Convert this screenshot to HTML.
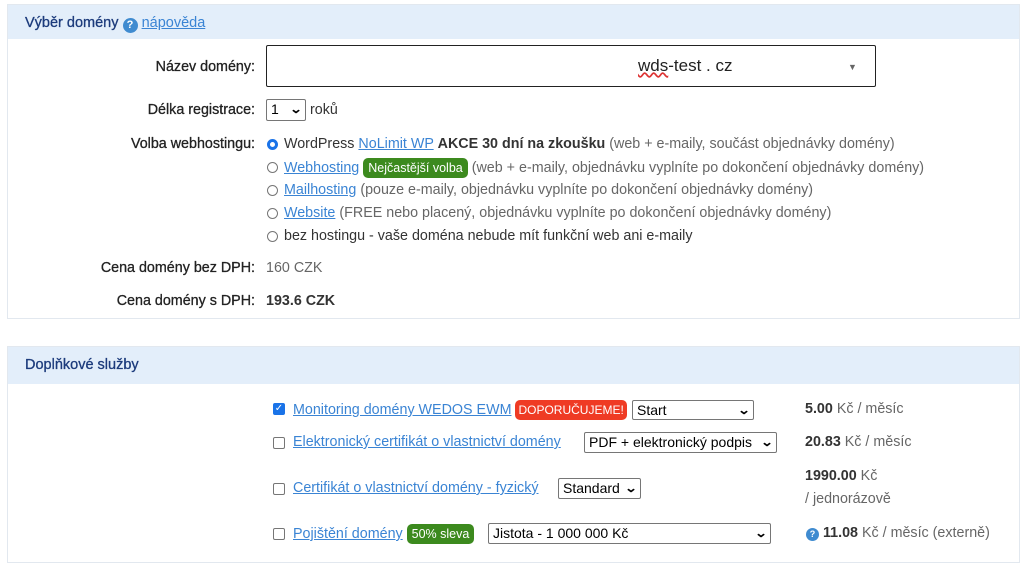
<!DOCTYPE html><html><head><meta charset="utf-8"><style>
body{margin:0;width:1024px;height:568px;background:#fff;font-family:"Liberation Sans",sans-serif;font-size:14.3px;color:#333;position:relative;overflow:hidden}
.a{position:absolute;white-space:nowrap;line-height:18px}
.panel{position:absolute;left:7px;width:1011px;border:1px solid #e2e8ef;background:#fff}
.hd{background:#e3eefa;height:34px;color:#1c3b7c;font-size:14.5px;padding-left:17px;line-height:34px;-webkit-text-stroke:0.3px #1c3b7c}
.lbl{position:absolute;right:769px;white-space:nowrap;line-height:18px;color:#222;-webkit-text-stroke:0.3px #222}
a{color:#3a84d4;text-decoration:underline}
.g{color:#666}
.sel{position:absolute;border:1px solid #767676;border-radius:2px;background:#fff;color:#000;font-size:14px;line-height:18px;padding-left:4px;box-sizing:border-box}
.sel i{position:absolute;right:4px;top:0px;font-style:normal;font-size:12px;font-weight:bold;transform:scaleX(1.3)}
.rad{position:absolute;width:11px;height:11px;border:1px solid #767676;border-radius:50%;box-sizing:border-box}
.cb{position:absolute;width:12px;height:12px;border:1px solid #767676;border-radius:2px;box-sizing:border-box}
.badge{display:inline-block;color:#fff;border-radius:5px;padding:0 5px;font-size:12.5px;line-height:20px;vertical-align:middle}
.q{display:inline-block;width:15px;height:15px;border-radius:50%;background:#3f8bd0;color:#fff;font-size:11px;font-weight:bold;text-align:center;line-height:15px;vertical-align:-2px}
</style></head><body>
<div class="panel" style="top:4px;height:313px"><div class="hd" style="line-height:36px">Výběr domény <span class="q" style="vertical-align:-1px;-webkit-text-stroke:0">?</span> <a style="-webkit-text-stroke:0">nápověda</a></div></div>
<div class="lbl" style="top:58px">Název domény:</div>
<div style="position:absolute;left:266px;top:45px;width:610px;height:42px;border:1px solid #222;box-sizing:border-box;border-radius:2px"></div>
<div class="a" style="left:638px;top:57px;font-size:17px;color:#222"><span style="text-decoration:underline wavy #d33">wds</span>-test . cz</div>
<div class="a" style="left:848px;top:58px;font-size:9px;color:#666">▼</div>
<div class="lbl" style="top:101px">Délka registrace:</div>
<div class="sel" style="left:266px;top:99px;width:40px;height:22px">1<i>⌄</i></div>
<div class="a" style="left:310px;top:101px">roků</div>
<div class="lbl" style="top:135px">Volba webhostingu:</div>
<div class="rad" style="left:267px;top:139px;border:3px solid #1a73e8"></div>
<div class="a" style="left:284px;top:135px">WordPress <a>NoLimit WP</a> <b>AKCE 30 dní na zkoušku</b> <span class="g">(web + e-maily, součást objednávky domény)</span></div>
<div class="rad" style="left:267px;top:162px"></div>
<div class="a" style="left:284px;top:158px"><a>Webhosting</a> <span class="badge" style="background:#3c8a1e">Nejčastější volba</span> <span class="g">(web + e-maily, objednávku vyplníte po dokončení objednávky domény)</span></div>
<div class="rad" style="left:267px;top:185px"></div>
<div class="a" style="left:284px;top:181px"><a>Mailhosting</a> <span class="g">(pouze e-maily, objednávku vyplníte po dokončení objednávky domény)</span></div>
<div class="rad" style="left:267px;top:208px"></div>
<div class="a" style="left:284px;top:204px"><a>Website</a> <span class="g">(FREE nebo placený, objednávku vyplníte po dokončení objednávky domény)</span></div>
<div class="rad" style="left:267px;top:231px"></div>
<div class="a" style="left:284px;top:227px">bez hostingu - vaše doména nebude mít funkční web ani e-maily</div>
<div class="lbl" style="top:259px">Cena domény bez DPH:</div>
<div class="a g" style="left:266px;top:259px">160 CZK</div>
<div class="lbl" style="top:292px">Cena domény s DPH:</div>
<div class="a" style="left:266px;top:292px;font-weight:bold">193.6 CZK</div>

<div class="panel" style="top:346px;height:215px"><div class="hd" style="height:37px;line-height:37px">Doplňkové služby</div></div>
<div class="cb" style="left:273px;top:403px;background:#1a73e8;border-color:#1a73e8;color:#fff;font-size:10px;line-height:10px;text-align:center">✓</div>
<div class="a" style="left:293px;top:400px"><a>Monitoring domény WEDOS EWM</a> <span class="badge" style="background:#ef3b24;padding:0 3px;font-size:12px">DOPORUČUJEME!</span></div>
<div class="sel" style="left:632px;top:400px;width:122px;height:20px">Start<i>⌄</i></div>
<div class="a" style="left:805px;top:400px" ><b>5.00</b> <span class="g">Kč / měsíc</span></div>
<div class="cb" style="left:273px;top:437px"></div>
<div class="a" style="left:293px;top:433px"><a>Elektronický certifikát o vlastnictví domény</a></div>
<div class="sel" style="left:584px;top:432px;width:193px;height:21px">PDF + elektronický podpis<i>⌄</i></div>
<div class="a" style="left:805px;top:433px"><b>20.83</b> <span class="g">Kč / měsíc</span></div>
<div class="cb" style="left:273px;top:483px"></div>
<div class="a" style="left:293px;top:479px"><a>Certifikát o vlastnictví domény - fyzický</a></div>
<div class="sel" style="left:558px;top:478px;width:83px;height:21px">Standard<i>⌄</i></div>
<div class="a" style="left:805px;top:467px"><b>1990.00</b> <span class="g">Kč</span></div>
<div class="a g" style="left:805px;top:490px">/ jednorázově</div>
<div class="cb" style="left:273px;top:528px"></div>
<div class="a" style="left:293px;top:524px"><a>Pojištění domény</a> <span class="badge" style="background:#3c8a1e">50% sleva</span></div>
<div class="sel" style="left:488px;top:523px;width:283px;height:21px">Jistota - 1 000 000 Kč<i>⌄</i></div>
<div class="a" style="left:806px;top:524px"><span class="q" style="width:13px;height:13px;line-height:13px;font-size:9px;vertical-align:0">?</span> <b>11.08</b> <span class="g">Kč / měsíc (externě)</span></div>
</body></html>
